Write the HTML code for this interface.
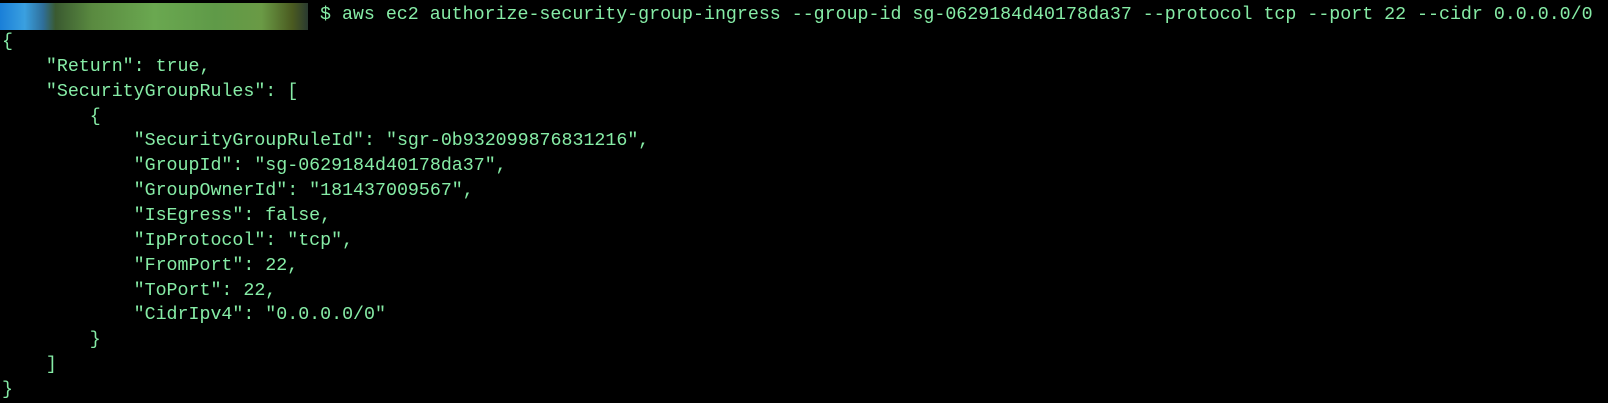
<!DOCTYPE html>
<html><head><style>
html,body{margin:0;padding:0;background:#000;width:1608px;height:403px;overflow:hidden}
.t{margin:0;position:absolute;font-family:"Liberation Mono",monospace;font-size:18.3px;line-height:24.5px;color:#86eca6;white-space:pre}
.blur{position:absolute;left:0;top:3px;width:308px;height:27px;background:linear-gradient(90deg,#1a7fd8 0,#3aa0e0 8%,#2f6f9a 14%,#3a5a30 18%,#5a8a40 30%,#6aa850 50%,#5f9a48 70%,#6a9a45 85%,#4a5a20 95%,#2a3a30 100%)}
</style></head><body>
<div class="blur"></div>
<div class="t" style="left:320px;top:3px">$ aws ec2 authorize-security-group-ingress --group-id sg-0629184d40178da37 --protocol tcp --port 22 --cidr 0.0.0.0/0</div>
<div class="t" style="left:2px;top:30px">{</div>
<div class="t" style="left:2px;top:55px">    "Return": true,</div>
<div class="t" style="left:2px;top:80px">    "SecurityGroupRules": [</div>
<div class="t" style="left:2px;top:105px">        {</div>
<div class="t" style="left:2px;top:129px">            "SecurityGroupRuleId": "sgr-0b932099876831216",</div>
<div class="t" style="left:2px;top:154px">            "GroupId": "sg-0629184d40178da37",</div>
<div class="t" style="left:2px;top:179px">            "GroupOwnerId": "181437009567",</div>
<div class="t" style="left:2px;top:204px">            "IsEgress": false,</div>
<div class="t" style="left:2px;top:229px">            "IpProtocol": "tcp",</div>
<div class="t" style="left:2px;top:254px">            "FromPort": 22,</div>
<div class="t" style="left:2px;top:279px">            "ToPort": 22,</div>
<div class="t" style="left:2px;top:303px">            "CidrIpv4": "0.0.0.0/0"</div>
<div class="t" style="left:2px;top:328px">        }</div>
<div class="t" style="left:2px;top:353px">    ]</div>
<div class="t" style="left:2px;top:378px">}</div>
</body></html>
